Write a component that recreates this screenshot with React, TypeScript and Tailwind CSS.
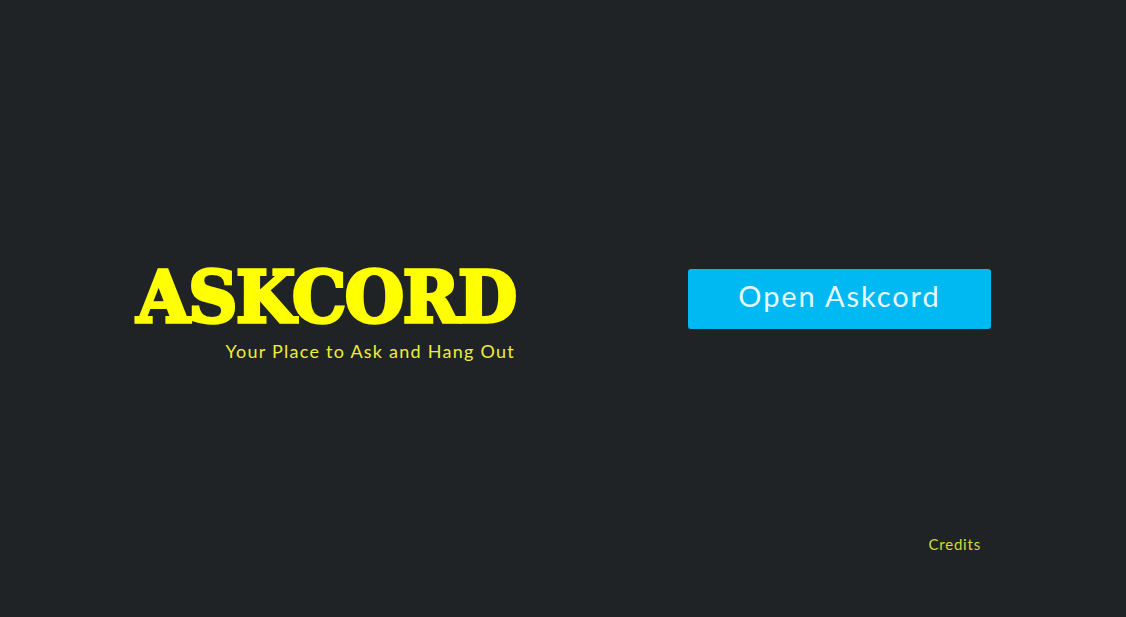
export default function App() {
  return (
    <div className="flex h-[617px] w-full flex-col bg-[#202325] font-['Lato',sans-serif]">
      <div className="flex h-[530px] items-center pt-[62px]">
        <div className="ml-[136px] flex w-[382px] flex-col items-end pt-[36px]">
          <h1 className="mr-[2px] origin-right scale-x-[0.96] font-['DejaVu_Serif',serif] text-[71px] leading-[62px] font-bold tracking-[-1.5px] whitespace-nowrap text-[#ffff00] [-webkit-text-stroke:3.5px_#ffff00]">
            ASKCORD
          </h1>
          <p className="mt-[11px] mr-[3px] text-[18px] leading-[24px] tracking-[1.25px] text-[#eded3c]">
            Your Place to Ask and Hang Out
          </p>
        </div>
        <button className="mt-[6px] ml-[170px] h-[60px] w-[303px] rounded-[3px] bg-[#00b9f2] pb-[7px] text-[29px] tracking-[1.9px] text-[#e6faff]">
          Open Askcord
        </button>
      </div>
      <div className="mt-[4px] flex justify-end pr-[145px]">
        <span className="text-[15px] leading-[20px] tracking-[0.8px] text-[#d4d940]">Credits</span>
      </div>
    </div>
  );
}
